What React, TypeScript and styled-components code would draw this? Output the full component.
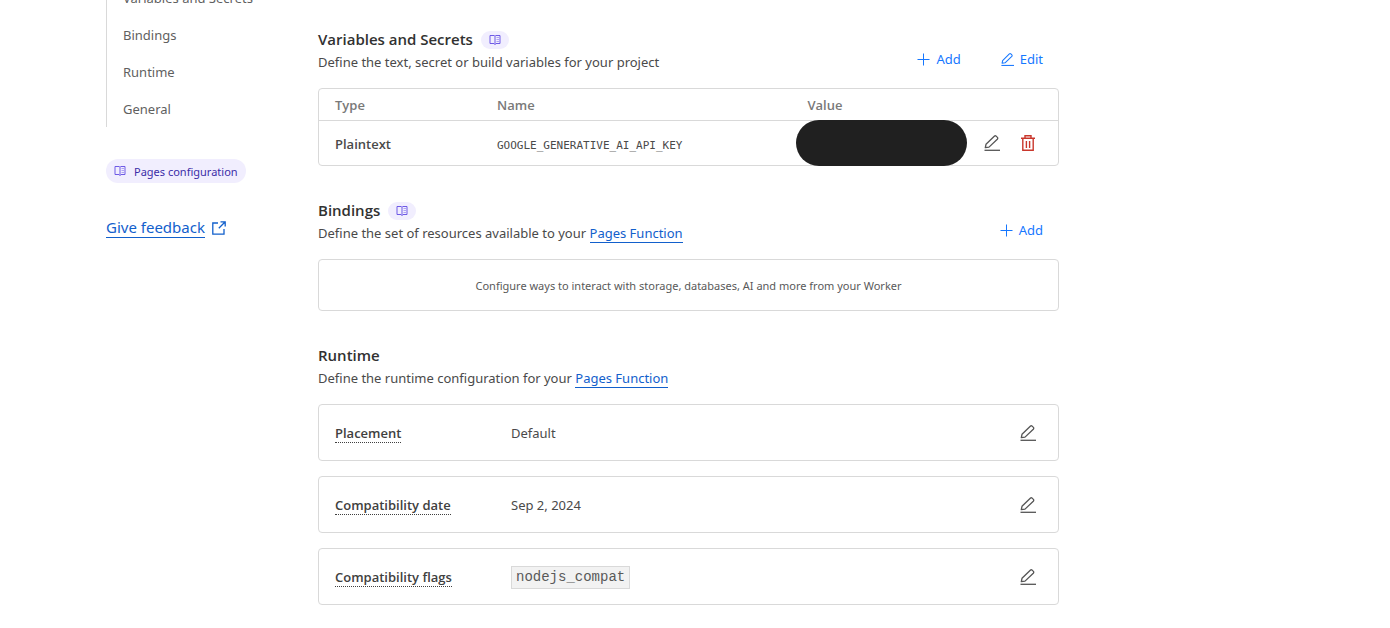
import React from "react";
import styled, { createGlobalStyle } from "styled-components";

const GlobalStyle = createGlobalStyle`
  * { box-sizing: border-box; }
  body {
    margin: 0;
    background: #fff;
    color: #4a4a4a;
    font: 13px/23px "Noto Sans", "Open Sans", sans-serif;
  }
  h2, p, ul, dl, dd { margin: 0; padding: 0; }
`;

const Page = styled.div`
  display: grid;
  grid-template-columns: 212px minmax(0, 1fr);
  padding: 0 331px 23px 106px;
  overflow: hidden;
  @media (max-width: 1100px) {
    padding-left: 24px;
    padding-right: 24px;
  }
`;

const Sidebar = styled.aside`
  display: flex;
  flex-direction: column;
  align-items: flex-start;
`;

const NavList = styled.ul`
  list-style: none;
  margin-top: -21px;
  border-left: 1px solid #d9d9d9;
`;

const NavLink = styled.a`
  display: block;
  padding: 8px 0 6px 16px;
  color: #5f5f5f;
  text-decoration: none;
`;

const DocsLink = styled.a`
  display: flex;
  align-items: center;
  gap: 8px;
  height: 24px;
  margin-top: 32px;
  padding: 0 8px;
  border-radius: 12px;
  background: #f1eefe;
  color: #3b2da8;
  font-size: 11px;
  text-decoration: none;
`;

const FeedbackLink = styled.a`
  display: flex;
  align-items: center;
  gap: 7px;
  margin-top: 34px;
  color: #1260cc;
  font-size: 15px;
  line-height: 20px;
  text-decoration: none;
  span { border-bottom: 1px solid currentColor; }
`;

const Main = styled.main`
  display: flex;
  flex-direction: column;
  gap: 33px;
  padding-top: 28px;
`;

const SectionHeader = styled.header`
  display: flex;
  justify-content: space-between;
  align-items: flex-end;
  margin-bottom: 14px;
`;

const TitleRow = styled.div`
  display: flex;
  align-items: center;
  gap: 8px;
`;

const Title = styled.h2`
  color: #313131;
  font-family: "Open Sans", "Noto Sans", sans-serif;
  font-size: 15px;
  font-weight: 600;
  line-height: 23px;
`;

const DocsBadge = styled.a`
  display: flex;
  align-items: center;
  justify-content: center;
  width: 28px;
  height: 18px;
  border-radius: 9px;
  background: #f1eefe;
`;

const TextLink = styled.a`
  color: #1260cc;
  text-decoration: none;
  border-bottom: 1px solid currentColor;
`;

const Actions = styled.div`
  display: flex;
  gap: 8px;
`;

const ActionButton = styled.button`
  display: flex;
  align-items: center;
  gap: 6px;
  height: 30px;
  padding: 0 16px;
  border: 0;
  background: none;
  color: #1677ff;
  font: inherit;
  cursor: pointer;
`;

const Panel = styled.div`
  border: 1px solid #d9d9d9;
  border-radius: 4px;
`;

const VariableTable = styled.table`
  width: 100%;
  table-layout: fixed;
  border-spacing: 0;
  text-align: left;
  th, td { padding: 2px 0 0 16px; }
  thead th {
    height: 32px;
    border-bottom: 1px solid #d9d9d9;
    color: #797979;
    font-family: "Open Sans", "Noto Sans", sans-serif;
    font-weight: 600;
  }
  tbody th, tbody td { height: 44px; }
  tbody th {
    font-family: "Open Sans", "Noto Sans", sans-serif;
    font-weight: 600;
  }
`;

const Column = styled.col<{ $width?: string }>`
  width: ${({ $width }) => $width ?? "auto"};
`;

const VariableName = styled.code`
  font: 11px/16px "DejaVu Sans Mono", monospace;
`;

const ValueCell = styled.td`
  position: relative;
`;

const Redaction = styled.span`
  position: absolute;
  top: -1px;
  left: 5px;
  width: 171px;
  height: 46px;
  border-radius: 23px;
  background: #202020;
`;

const RowActions = styled.div`
  display: flex;
  justify-content: flex-end;
  gap: 20px;
  padding: 0 22px 2px 0;
`;

const IconButton = styled.button<{ $danger?: boolean }>`
  display: flex;
  padding: 0;
  border: 0;
  background: none;
  color: ${({ $danger }) => ($danger ? "#c9372c" : "#555")};
  cursor: pointer;
`;

const EmptyPanel = styled(Panel)`
  padding: 15px 16px 13px;
  color: #595959;
  font-size: 11px;
  line-height: 22px;
  text-align: center;
`;

const Settings = styled.dl`
  display: flex;
  flex-direction: column;
  gap: 15px;
`;

const Setting = styled(Panel)`
  display: grid;
  grid-template-columns: 176px minmax(0, 1fr) auto;
  align-items: center;
  height: 57px;
  padding: 0 22px 0 16px;
`;

const Term = styled.dt`
  padding-top: 2px;
  color: #404040;
  font-family: "Open Sans", "Noto Sans", sans-serif;
  font-weight: 600;
  line-height: 17px;
  span {
    display: inline-block;
    border-bottom: 1px dotted #404040;
  }
`;

const TextValue = styled.span`
  display: block;
  padding-top: 2px;
`;

const Flag = styled.code`
  display: inline-block;
  padding: 0 4px;
  border: 1px solid #d9d9d9;
  background: #f2f2f2;
  color: #595959;
  font: 14px/21px "Liberation Mono", monospace;
`;

const BookIcon = () => (
  <svg width="12" height="12" viewBox="0 0 12 12" fill="none" stroke="#6e5ae6" aria-hidden="true">
    <path d="M1 1.500H5L6 2.300 7 1.500H11V9.500H7L6 10.500 5 9.500H1z" />
    <path d="M6 2.500v8" />
    <path d="M7.500 3.500H10M7.500 5.500H10M7.500 7.500H10" opacity=".5" />
  </svg>
);

const PencilIcon = ({ size = 16 }: { size?: number }) => (
  <svg width={size} height={size} viewBox="0 0 16 16" fill="none" stroke="currentColor" strokeWidth="1.3" aria-hidden="true">
    <path d="M1.300 12.600 2 9.300 10.300 1.200Q11.200.4 12.100 1.100L13.400 2.400Q14.100 3.300 13.300 4.200L5 12.100z" strokeLinejoin="round" />
    <path d="M.5 15.300h15.500" />
  </svg>
);

const PlusIcon = () => (
  <svg width="13" height="13" viewBox="0 0 13 13" stroke="currentColor" aria-hidden="true">
    <path d="M6.500.5v12M.5 6.500h12" />
  </svg>
);

const TrashIcon = () => (
  <svg width="16" height="16" viewBox="0 0 16 16" fill="none" stroke="currentColor" strokeWidth="1.400" aria-hidden="true">
    <path d="M1 3.200h14M5 3.200V.8h6v2.400M2.800 3.200v12.100h10.400V3.200M6.400 6v7M9.600 6v7" />
  </svg>
);

const ExternalIcon = () => (
  <svg width="14" height="14" viewBox="0 0 14 14" fill="none" stroke="currentColor" strokeWidth="1.300" aria-hidden="true">
    <path d="M6 2H.8v11.200H12V8M8.500.8h4.700v4.700M13 1 6.800 7.200" />
  </svg>
);

const navItems = ["Variables and Secrets", "Bindings", "Runtime", "General"];

const settings: { term: string; value: React.ReactNode }[] = [
  { term: "Placement", value: <TextValue>Default</TextValue> },
  { term: "Compatibility date", value: <TextValue>Sep 2, 2024</TextValue> },
  { term: "Compatibility flags", value: <Flag>nodejs_compat</Flag> },
];

interface SectionProps {
  title: string;
  description: React.ReactNode;
  docs?: boolean;
  actions?: React.ReactNode;
  children: React.ReactNode;
}

const Section = ({ title, description, docs, actions, children }: SectionProps) => (
  <section>
    <SectionHeader>
      <div>
        <TitleRow>
          <Title>{title}</Title>
          {docs && (
            <DocsBadge href="#docs" aria-label={`${title} documentation`}>
              <BookIcon />
            </DocsBadge>
          )}
        </TitleRow>
        <p>{description}</p>
      </div>
      {actions && <Actions>{actions}</Actions>}
    </SectionHeader>
    {children}
  </section>
);

export default function App() {
  return (
    <>
      <GlobalStyle />
      <Page>
        <Sidebar>
          <nav>
            <NavList>
              {navItems.map((item) => (
                <li key={item}>
                  <NavLink href={`#${item}`}>{item}</NavLink>
                </li>
              ))}
            </NavList>
          </nav>
          <DocsLink href="#docs">
            <BookIcon />
            Pages configuration
          </DocsLink>
          <FeedbackLink href="#feedback">
            <span>Give feedback</span>
            <ExternalIcon />
          </FeedbackLink>
        </Sidebar>
        <Main>
          <Section
            title="Variables and Secrets"
            description="Define the text, secret or build variables for your project"
            docs
            actions={
              <>
                <ActionButton><PlusIcon />Add</ActionButton>
                <ActionButton><PencilIcon size={13} />Edit</ActionButton>
              </>
            }
          >
            <Panel>
              <VariableTable>
                <colgroup>
                  <Column $width="162px" />
                  <Column $width="42%" />
                  <Column />
                  <Column $width="90px" />
                </colgroup>
                <thead>
                  <tr>
                    <th scope="col">Type</th>
                    <th scope="col">Name</th>
                    <th scope="col">Value</th>
                    <th />
                  </tr>
                </thead>
                <tbody>
                  <tr>
                    <th scope="row">Plaintext</th>
                    <td><VariableName>GOOGLE_GENERATIVE_AI_API_KEY</VariableName></td>
                    <ValueCell><Redaction /></ValueCell>
                    <td>
                      <RowActions>
                        <IconButton aria-label="Edit variable"><PencilIcon /></IconButton>
                        <IconButton $danger aria-label="Delete variable"><TrashIcon /></IconButton>
                      </RowActions>
                    </td>
                  </tr>
                </tbody>
              </VariableTable>
            </Panel>
          </Section>
          <Section
            title="Bindings"
            description={<>Define the set of resources available to your <TextLink href="#functions">Pages Function</TextLink></>}
            docs
            actions={<ActionButton><PlusIcon />Add</ActionButton>}
          >
            <EmptyPanel>Configure ways to interact with storage, databases, AI and more from your Worker</EmptyPanel>
          </Section>
          <Section
            title="Runtime"
            description={<>Define the runtime configuration for your <TextLink href="#functions">Pages Function</TextLink></>}
          >
            <Settings>
              {settings.map(({ term, value }) => (
                <Setting key={term}>
                  <Term><span>{term}</span></Term>
                  <dd>{value}</dd>
                  <IconButton aria-label={`Edit ${term}`}><PencilIcon /></IconButton>
                </Setting>
              ))}
            </Settings>
          </Section>
        </Main>
      </Page>
    </>
  );
}
